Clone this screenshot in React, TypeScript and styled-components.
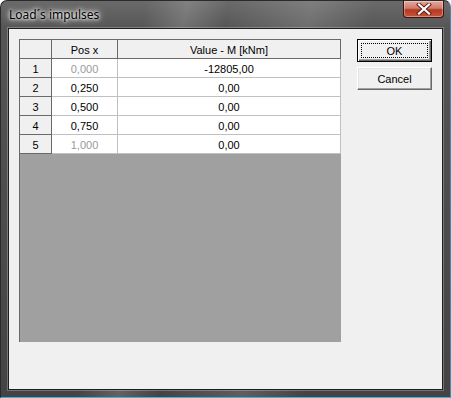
import styled, { createGlobalStyle } from 'styled-components';

const GlobalStyle = createGlobalStyle`
  html, body {
    margin: 0;
    padding: 0;
    background: #ffffff;
  }
`

type Row = { pos: string; value: string; locked?: boolean }

const rows: Row[] = [
    { pos: '0,000', value: '-12805,00', locked: true },
    { pos: '0,250', value: '0,00' },
    { pos: '0,500', value: '0,00' },
    { pos: '0,750', value: '0,00' },
    { pos: '1,000', value: '0,00', locked: true },
]

export default function App() {
    return (
        <>
            <GlobalStyle />
            <Window>
                <TitleBar>
                    <Title>Load´s impulses</Title>
                    <CloseButton>
                        <svg width="16" height="12" viewBox="0 0 16 12">
                            <path d="M3 1.5 L13 10.5 M13 1.5 L3 10.5" stroke="#5a1a10" strokeWidth="4" strokeLinecap="square" />
                            <path d="M3 1.5 L13 10.5 M13 1.5 L3 10.5" stroke="#ffffff" strokeWidth="2.2" strokeLinecap="square" />
                        </svg>
                    </CloseButton>
                </TitleBar>
                <Client>
                    <Grid>
                        <GridRow>
                            <HeadCell $width={32} />
                            <HeadCell $width={66}>Pos x</HeadCell>
                            <HeadCell $width={223}>Value - M [kNm]</HeadCell>
                        </GridRow>
                        {rows.map((row, i) => (
                            <GridRow key={i}>
                                <HeadCell $width={32}>{i + 1}</HeadCell>
                                <DataCell $width={66} $muted={row.locked}>{row.pos}</DataCell>
                                <DataCell $width={223}>{row.value}</DataCell>
                            </GridRow>
                        ))}
                    </Grid>
                    <Buttons>
                        <DefaultButton><Focus>OK</Focus></DefaultButton>
                        <Button>Cancel</Button>
                    </Buttons>
                </Client>
            </Window>
        </>
    )
}

const Window = styled.div`
  width: 451px;
  height: 398px;
  box-sizing: border-box;
  display: flex;
  flex-direction: column;
  padding: 0 7px 7px 7px;
  border-radius: 7px 7px 0 0;
  border: 1px solid #2a2a2a;
  border-bottom-color: #3ab4d8;
  border-right-color: #3a8fb0;
  background:
    linear-gradient(100deg, rgba(255,255,255,0) 28%, rgba(255,255,255,0.16) 36%, rgba(255,255,255,0) 44%, rgba(255,255,255,0.14) 60%, rgba(255,255,255,0) 72%),
    linear-gradient(180deg, #6a6a6a 0px, #555555 28px, #444444 100%);
  font-family: "Liberation Sans", Arial, sans-serif;
`

const TitleBar = styled.div`
  height: 27px;
  display: flex;
  align-items: flex-start;
  justify-content: space-between;
`

const Title = styled.span`
  margin: 7px 0 0 1px;
  font-family: "Noto Sans", "Liberation Sans", sans-serif;
  font-size: 12px;
  line-height: 14px;
  color: #000;
  padding: 0 6px 0 0;
  text-shadow: 0 0 8px #fff, 0 0 5px #fff, 0 0 3px #fff;
`

const CloseButton = styled.div`
  width: 41px;
  height: 17px;
  margin-right: -1px;
  box-sizing: border-box;
  border: 1px solid #3a1410;
  border-top: none;
  border-radius: 0 0 4px 4px;
  background: linear-gradient(180deg, #e3a99e 0%, #d07b6a 45%, #b23a22 55%, #c9533a 100%);
  box-shadow: inset 0 0 0 1px rgba(255,255,255,0.35);
  display: flex;
  align-items: center;
  justify-content: center;
`

const Client = styled.div`
  flex: 1;
  display: flex;
  align-items: flex-start;
  box-sizing: border-box;
  padding: 10px 10px 0 10px;
  background: #f0f0f0;
  border: 1px solid #1e1e1e;
  box-shadow: 0 0 0 1px rgba(255,255,255,0.25);
`

const Grid = styled.div`
  width: 322px;
  height: 303px;
  box-sizing: border-box;
  background: #a0a0a0;
  border-left: 1px solid #696969;
  border-top: 1px solid #696969;
  display: flex;
  flex-direction: column;
`

const GridRow = styled.div`
  display: flex;
  height: 19px;
`

const Cell = styled.div<{ $width: number }>`
  width: ${p => p.$width}px;
  height: 19px;
  box-sizing: border-box;
  display: flex;
  align-items: center;
  justify-content: center;
  font-size: 11px;
  padding-top: 1px;
`

const HeadCell = styled(Cell)`
  background: #f0f0f0;
  color: #000;
  border-right: 1px solid #696969;
  border-bottom: 1px solid #696969;
`

const DataCell = styled(Cell)<{ $muted?: boolean }>`
  background: #ffffff;
  color: ${p => p.$muted ? '#9a9a9a' : '#000'};
  border-right: 1px solid #c0c0c0;
  border-bottom: 1px solid #c0c0c0;
`

const Buttons = styled.div`
  display: flex;
  flex-direction: column;
  gap: 5px;
  margin-left: 16px;
`

const Button = styled.div`
  width: 75px;
  height: 23px;
  box-sizing: border-box;
  display: flex;
  align-items: center;
  justify-content: center;
  font-size: 11px;
  color: #000;
  background: #f0f0f0;
  border: 1px solid;
  border-color: #ffffff #696969 #696969 #ffffff;
  box-shadow: inset -1px -1px 0 #a0a0a0, inset 1px 1px 0 #e3e3e3;
`

const DefaultButton = styled(Button)`
  border: 1px solid #000;
  box-shadow: inset 1px 1px 0 #ffffff, inset -1px -1px 0 #696969, inset -2px -2px 0 #a0a0a0;
  padding: 3px;
`

const Focus = styled.div`
  flex: 1;
  align-self: stretch;
  display: flex;
  align-items: center;
  justify-content: center;
  border: 1px dotted #000;
`
